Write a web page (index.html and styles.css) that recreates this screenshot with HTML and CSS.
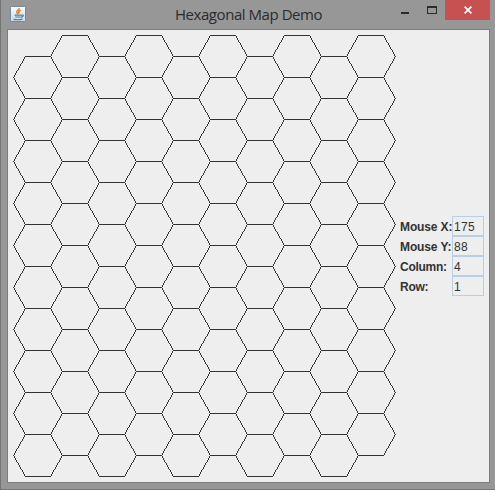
FILE: index.html
```
<!DOCTYPE html>
<html lang="en">
<head>
<meta charset="utf-8">
<title>Hexagonal Map Demo</title>
<link rel="stylesheet" href="styles.css">
</head>
<body>
<div class="window">
  <header class="titlebar">
    <svg class="app-icon" width="16" height="16" viewBox="0 0 16 16">
      <defs><linearGradient id="tile" x1="0" y1="0" x2="0" y2="1"><stop offset="0" stop-color="#fcfcfc"/><stop offset="1" stop-color="#c9dbe8"/></linearGradient></defs>
      <rect x=".5" y=".5" width="15" height="15" rx="1" fill="url(#tile)" stroke="#6c8ba3"/>
      <path d="M9.200 2C10 4 5.800 4.600 6.800 6.500L8 8M10.800 4.200C8.400 5 8.200 6 9.200 7.600" fill="none" stroke="#ee7d22" stroke-width="1.500"/>
      <path d="M4.500 9.200h6.500M5.200 11h5.300M3.500 13.300q4.500 1 9-.2M11 9.300q3-.8 2 .8-.6 1-2.300 1.300" fill="none" stroke="#547b98" stroke-width="1.200"/>
    </svg>
    <h1 class="title">Hexagonal Map Demo</h1>
    <div class="controls">
      <span class="control minimize"><i></i></span>
      <span class="control maximize"><i></i></span>
      <span class="control close"><svg width="8" height="8" viewBox="0 0 8 8"><path d="M.6.6l6.800 6.800M7.400.6L.6 7.400" stroke="#fff" stroke-width="1.700"/></svg></span>
    </div>
  </header>
  <main class="content">
    <canvas class="map" id="map" width="384" height="444"></canvas>
    <dl class="readout">
      <dt>Mouse X:</dt><dd>175</dd>
      <dt>Mouse Y:</dt><dd>88</dd>
      <dt class="tight">Column:</dt><dd>4</dd>
      <dt class="tight">Row:</dt><dd>1</dd>
    </dl>
  </main>
</div>
<script src="map.js"></script>
</body>
</html>
```
FILE: styles.css
```
* { box-sizing: border-box; }
body { margin: 0; }
.window {
  display: flex;
  flex-direction: column;
  width: 495px;
  height: 490px;
  padding: 0 5px 7px 7px;
  background: #979797;
  box-shadow: inset 1px 0 #747474, inset 0 -1px #747474;
}
.titlebar {
  display: flex;
  flex: 0 0 29px;
  align-items: flex-start;
}
.app-icon { flex: none; margin: 6px 0 0 3px; }
.title {
  flex: 1;
  margin: 4px 0 0 149px;
  font: 400 15px/20px "Open Sans", sans-serif;
  letter-spacing: -0.45px;
  white-space: nowrap;
  color: #2b2b2b;
}
.controls { display: flex; }
.control { display: flex; justify-content: center; width: 27px; height: 20px; }
.minimize i { width: 8px; height: 2px; margin-top: 12px; background: #2b2b2b; }
.maximize i { width: 10px; height: 8px; margin-top: 6px; border: 1px solid #2b2b2b; border-top-width: 2px; }
.close { width: 45px; align-items: center; background: #c75050; }
.content {
  display: flex;
  flex: 1;
  align-items: center;
  border: 1px solid #7d7d7d;
  background: #eee;
}
.map { flex: none; align-self: flex-start; margin: 5px 3px 0 5px; }
.readout {
  display: grid;
  grid-template-columns: 52px 32px;
  grid-auto-rows: 20px;
  margin: 0;
  font: 12px/20px "Liberation Sans", Arial, sans-serif;
  color: #333;
}
.readout dt { padding-top: 1px; font-weight: 700; letter-spacing: -0.12px; white-space: nowrap; }
.readout .tight { letter-spacing: -0.28px; }
.readout dd {
  margin: 0;
  padding: 0 1px;
  border: 1px solid #b8cfe5;
  letter-spacing: 0.3px;
}
```
FILE: map.js
```
const COLS = 10, ROWS = 10;
const ctx = document.getElementById("map").getContext("2d");
ctx.fillStyle = "#333";

// Unantialiased line between two pixel centres.
function line(x0, y0, x1, y1) {
  const dx = Math.abs(x1 - x0), dy = -Math.abs(y1 - y0);
  const sx = x0 < x1 ? 1 : -1, sy = y0 < y1 ? 1 : -1;
  let err = dx + dy;
  for (;;) {
    ctx.fillRect(x0, y0, 1, 1);
    if (x0 === x1 && y0 === y1) break;
    const e2 = 2 * err;
    if (e2 >= dy) { err += dy; x0 += sx; }
    if (e2 <= dx) { err += dx; y0 += sy; }
  }
}

for (let c = 0; c < COLS; c++) {
  for (let r = 0; r < ROWS; r++) {
    const x = c * 37, y = r * 42 + (c % 2 ? 0 : 21);
    const pts = [[x + 12, y], [x + 37, y], [x + 49, y + 21], [x + 37, y + 42], [x + 12, y + 42], [x, y + 21]];
    pts.forEach((p, i) => line(...p, ...pts[(i + 1) % 6]));
  }
}
```
